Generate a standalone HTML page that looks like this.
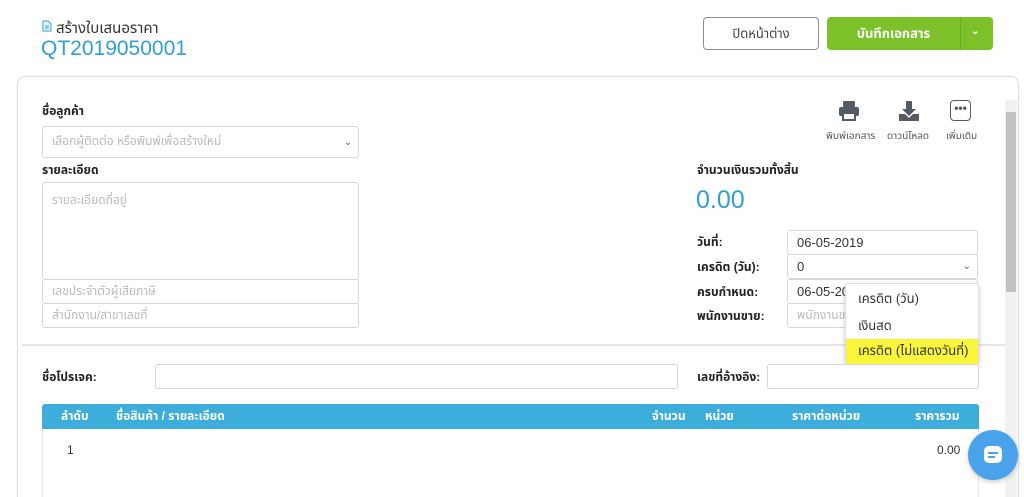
<!DOCTYPE html><html><head><meta charset="utf-8"><style>
*{box-sizing:border-box;margin:0;padding:0}
html{width:1024px;height:497px;overflow:hidden}
body{width:1024px;height:497px;overflow:hidden;background:#fff;font-family:"Liberation Sans","Noto Sans Thai","Noto Sans CJK SC",sans-serif;color:#333;font-size:12px;position:relative}
.a{position:absolute}
.inp{position:absolute;border:1px solid #d6d8db;border-radius:3px;background:#fff;color:#bbb;padding-left:9px;display:flex;align-items:center;font-size:12px}
.lb{position:absolute;font-weight:bold;font-size:12px;color:#222}
.th{position:absolute;top:404px;height:25px;line-height:25px;color:#fff;font-weight:bold;font-size:12px}
</style></head><body>
<svg class="a" style="left:42px;top:20px" width="10" height="12"><path d="M1 1h5l3 3v7H1z" fill="#e8f4fb" stroke="#3a9fd6"/><path d="M3 6h4M3 8h4" stroke="#3a9fd6"/></svg>
<div class="a" style="left:56px;top:17px;font-size:15px;color:#333">สร้างใบเสนอราคา</div>
<div class="a" style="left:41px;top:37px;font-size:21px;color:#2f9fd4">QT2019050001</div>
<div class="a" style="left:703px;top:17px;width:116px;height:33px;border:1px solid #8a8f96;border-radius:4px;text-align:center;line-height:31px;font-size:13px;color:#444">ปิดหน้าต่าง</div>
<div class="a" style="left:827px;top:17px;width:166px;height:33px;background:#7cc12a;border-radius:4px;color:#fff;font-size:13px;font-weight:bold">
<div class="a" style="left:0;width:133px;text-align:center;line-height:33px">บันทึกเอกสาร</div>
<div class="a" style="left:133px;top:0;width:1px;height:33px;background:#6aae1e"></div>
<div class="a" style="left:144px;top:9px;font-size:10px">⌄</div></div>
<div class="a" style="left:17px;top:76px;width:1002px;height:440px;border:1px solid #dcdfe3;border-radius:8px;box-shadow:0 0 4px rgba(0,0,0,.06)"></div>
<div class="a" style="left:1005px;top:100px;width:12px;height:397px;background:#f1f1f1"></div>
<div class="a" style="left:1006px;top:112px;width:10px;height:180px;background:#c1c1c1"></div>
<div class="lb" style="left:42px;top:103px">ชื่อลูกค้า</div>
<div class="inp" style="left:42px;top:126px;width:317px;height:32px">เลือกผู้ติดต่อ หรือพิมพ์เพื่อสร้างใหม่<span class="a" style="right:6px;color:#666;font-size:10px">⌄</span></div>
<div class="lb" style="left:42px;top:162px">รายละเอียด</div>
<div class="inp" style="left:42px;top:182px;width:317px;height:98px;align-items:flex-start;padding-top:9px">รายละเอียดที่อยู่</div>
<div class="inp" style="left:42px;top:279px;width:317px;height:25px">เลขประจำตัวผู้เสียภาษี</div>
<div class="inp" style="left:42px;top:303px;width:317px;height:25px">สำนักงาน/สาขาเลขที่</div>
<svg class="a" style="left:838px;top:100px" width="22" height="22" fill="#555b66"><rect x="5" y="1" width="12" height="6" rx="1"/><rect x="1" y="7" width="20" height="9" rx="2"/><rect x="5" y="13" width="12" height="7" fill="#fff" stroke="#555b66" stroke-width="2"/></svg>
<svg class="a" style="left:898px;top:100px" width="22" height="22" fill="#555b66"><path d="M8 1h6v8h4l-7 7-7-7h4z"/><path d="M1 14h6l4 4 4-4h6v7H1z"/></svg>
<div class="a" style="left:950px;top:100px;width:21px;height:21px;border:1.5px solid #555b66;border-radius:4px;text-align:center;line-height:14px;font-weight:bold;color:#555b66;font-size:12px">•••</div>
<div class="a" style="left:826px;top:128px;font-size:10px;color:#555">พิมพ์เอกสาร</div>
<div class="a" style="left:887px;top:128px;font-size:10px;color:#555">ดาวน์โหลด</div>
<div class="a" style="left:946px;top:128px;font-size:10px;color:#555">เพิ่มเติม</div>
<div class="lb" style="left:697px;top:162px">จำนวนเงินรวมทั้งสิ้น</div>
<div class="a" style="left:696px;top:186px;font-size:25px;color:#2f9fd4">0.00</div>
<div class="lb" style="left:697px;top:234px">วันที่:</div>
<div class="lb" style="left:697px;top:259px">เครดิต (วัน):</div>
<div class="lb" style="left:697px;top:284px">ครบกำหนด:</div>
<div class="lb" style="left:697px;top:308px">พนักงานขาย:</div>
<div class="inp" style="left:787px;top:230px;width:191px;height:25px;color:#333;font-size:13px">06-05-2019</div>
<div class="inp" style="left:787px;top:254px;width:191px;height:25px;color:#333;font-size:13px">0<span class="a" style="right:6px;color:#666;font-size:10px">⌄</span></div>
<div class="inp" style="left:787px;top:279px;width:191px;height:25px;color:#333;font-size:13px">06-05-2019</div>
<div class="inp" style="left:787px;top:303px;width:191px;height:25px">พนักงานขาย</div>
<div class="a" style="left:22px;top:344px;width:983px;height:2px;background:#e4e6ea"></div>
<div class="a" style="left:845px;top:283px;width:134px;height:82px;background:#fff;border:1px solid #ddd;border-radius:3px;box-shadow:0 2px 6px rgba(0,0,0,.2);font-size:13px;color:#333">
<div class="a" style="left:12px;top:5px">เครดิต (วัน)</div>
<div class="a" style="left:12px;top:32px">เงินสด</div>
<div class="a" style="left:0;top:55px;width:132px;height:26px;background:#f8f53a;padding-left:12px;line-height:24px">เครดิต (ไม่แสดงวันที่)</div></div>
<div class="lb" style="left:42px;top:369px">ชื่อโปรเจค:</div>
<div class="inp" style="left:155px;top:364px;width:523px;height:25px"></div>
<div class="lb" style="left:697px;top:369px">เลขที่อ้างอิง:</div>
<div class="inp" style="left:767px;top:364px;width:212px;height:25px"></div>
<div class="a" style="left:42px;top:404px;width:937px;height:25px;background:#3daedc;border-radius:3px 3px 0 0"></div>
<div class="th" style="left:61px">ลำดับ</div>
<div class="th" style="left:116px">ชื่อสินค้า / รายละเอียด</div>
<div class="th" style="left:652px">จำนวน</div>
<div class="th" style="left:705px">หน่วย</div>
<div class="th" style="left:792px">ราคาต่อหน่วย</div>
<div class="th" style="left:915px">ราคารวม</div>
<div class="a" style="left:42px;top:429px;width:937px;height:68px;border:1px solid #e4e6ea;border-top:0;border-bottom:0"></div>
<div class="a" style="left:67px;top:443px;font-size:12px">1</div>
<div class="a" style="left:937px;top:443px;font-size:12px">0.00</div>
<div class="a" style="left:968px;top:430px;width:50px;height:50px;border-radius:50%;background:#4aa3ea;box-shadow:0 2px 5px rgba(0,0,0,.2)"></div>
<div class="a" style="left:984px;top:446px;width:18px;height:17px;border-radius:5px;background:#fff"></div>
<div class="a" style="left:988px;top:452px;width:10px;height:2px;background:#4aa3ea"></div>
<div class="a" style="left:988px;top:456px;width:7px;height:2px;background:#4aa3ea"></div>
</body></html>
